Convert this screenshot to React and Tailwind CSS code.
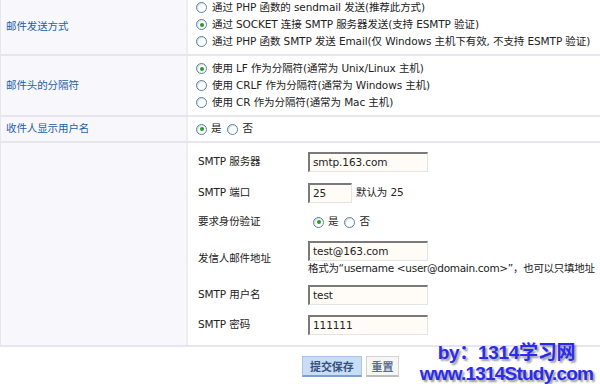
const font = { fontFamily: '"DejaVu Sans", "Noto Sans CJK SC", sans-serif' };

function Radio({ checked }) {
  return (
    <span className="inline-flex items-center justify-center w-[11px] h-[11px] rounded-full border border-[#5b7fa8] bg-white shrink-0 shadow-[inset_1px_1px_1px_rgba(0,0,0,0.15)]">
      {checked && <span className="w-[4px] h-[4px] rounded-full bg-[#22a022]" />}
    </span>
  );
}

function Option({ checked, children }) {
  return (
    <div className="flex items-center gap-[5px] h-[17px] whitespace-nowrap">
      <Radio checked={checked} />
      <span>{children}</span>
    </div>
  );
}

function Field({ value, width = 'w-[120px]' }) {
  return (
    <div className={`${width} h-[20px] border-t-2 border-l-2 border-t-[#7a7a7a] border-l-[#7a7a7a] border-r border-b border-r-[#e4e4e4] border-b-[#e4e4e4] bg-[#fffcf7] px-[3px] flex items-center text-[#222]`}>
      {value}
    </div>
  );
}

function Row({ label, children, className = '' }) {
  return (
    <div className="flex border-b-2 border-[#e6e6ef]">
      <div className="w-[187px] shrink-0 bg-[#f7f7fc] border-r-2 border-[#ececf3] flex items-center pl-[5px] text-[#1f5ea8]">
        {label}
      </div>
      <div className={`flex-1 ${className}`}>{children}</div>
    </div>
  );
}

function SubRow({ label, children, className = '' }) {
  return (
    <div className={`flex ${className}`}>
      <div className="w-[110px] shrink-0 text-[#222] flex items-center">{label}</div>
      <div className="flex-1">{children}</div>
    </div>
  );
}

function YesNo() {
  return (
    <div className="flex items-center gap-[4px]">
      <Radio checked />
      <span className="mr-[2px]">是</span>
      <Radio />
      <span>否</span>
    </div>
  );
}

export default function App() {
  return (
    <div className="relative w-[600px] h-[384px] bg-white overflow-hidden text-[10.5px] tracking-[-0.1px] text-[#222]" style={font}>
      <div className="border-l border-[#e6e6ef]">
        <Row label="邮件发送方式" className="h-[54px] pl-[8px]">
          <div className="-mt-[1px]">
            <Option>通过 PHP 函数的 sendmail 发送(推荐此方式)</Option>
            <Option checked>通过 SOCKET 连接 SMTP 服务器发送(支持 ESMTP 验证)</Option>
            <Option>通过 PHP 函数 SMTP 发送 Email(仅 Windows 主机下有效, 不支持 ESMTP 验证)</Option>
          </div>
        </Row>
        <Row label="邮件头的分隔符" className="h-[59px] pl-[8px] flex flex-col justify-center">
          <Option checked>使用 LF 作为分隔符(通常为 Unix/Linux 主机)</Option>
          <Option>使用 CRLF 作为分隔符(通常为 Windows 主机)</Option>
          <Option>使用 CR 作为分隔符(通常为 Mac 主机)</Option>
        </Row>
        <Row label="收件人显示用户名" className="h-[24px] pl-[8px] flex items-center">
          <YesNo />
        </Row>
        <Row label="" className="h-[202px] pl-[10px] pt-[9px] flex flex-col">
          <SubRow label="SMTP 服务器">
            <Field value="smtp.163.com" />
          </SubRow>
          <SubRow label="SMTP 端口" className="mt-[11px]">
            <div className="flex items-center gap-[4px]">
              <Field value="25" width="w-[44px]" />
              <span>默认为 25</span>
            </div>
          </SubRow>
          <SubRow label="要求身份验证" className="mt-[9px] h-[20px]">
            <div className="flex items-center h-full pl-[5px]">
              <YesNo />
            </div>
          </SubRow>
          <SubRow label="发信人邮件地址" className="mt-[9px]">
            <Field value="test@163.com" />
            <div className="h-[16px] flex items-center whitespace-nowrap tracking-[-0.3px]">格式为“username &lt;user@domain.com&gt;”，也可以只填地址</div>
          </SubRow>
          <SubRow label="SMTP 用户名" className="mt-[8px]">
            <Field value="test" />
          </SubRow>
          <SubRow label="SMTP 密码" className="mt-[10px]">
            <Field value="111111" />
          </SubRow>
        </Row>
      </div>
      <div className="flex gap-[4px] pl-[302px] pt-[9px]">
        <button className="h-[21px] px-[7px] bg-[#c9ddf7] border border-[#a9c4e6] border-b-2 border-b-[#7d9fcc] text-[#35527e] font-bold text-[11px]" style={{ fontFamily: '"Noto Sans CJK SC", sans-serif' }}>提交保存</button>
        <button className="h-[21px] px-[5px] bg-[#f6f6f6] border border-[#d4d4d4] border-b-2 border-b-[#bdbdbd] text-[#5a6f90] font-bold text-[11px]" style={{ fontFamily: '"Noto Sans CJK SC", sans-serif' }}>重置</button>
      </div>
      <div className="absolute left-[419px] top-[341px] w-[175px] flex flex-col items-center text-[#2b2bf0] font-bold leading-none [text-shadow:2px_2px_2px_#9a9a9a]" style={{ fontFamily: '"Liberation Sans", "Noto Sans CJK SC", sans-serif' }}>
        <div className="text-[19px] h-[23px] tracking-[-0.3px] pt-[2px]">by：1314学习网</div>
        <div className="text-[19px] tracking-[-0.8px]">www.1314Study.com</div>
      </div>
    </div>
  );
}
